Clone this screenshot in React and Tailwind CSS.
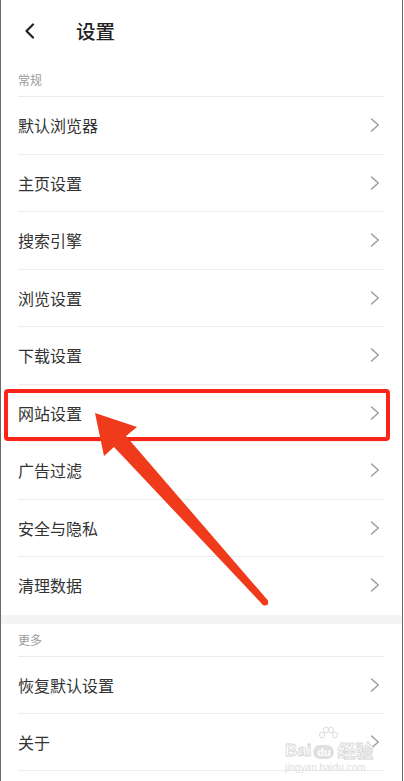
import React from "react";

const Chevron = () => (
  <svg width="10" height="14" viewBox="0 0 10 14" fill="none" className="shrink-0">
    <path d="M1.5 1 L8.3 7 L1.5 13" stroke="#9a9a9a" strokeWidth="1.4" strokeLinecap="round" strokeLinejoin="round" />
  </svg>
);

const Row = ({ label, last }) => (
  <div
    className={
      "h-[57.5px] flex items-center justify-between border-t border-[#ececec] pr-[5px] " +
      (last ? "border-b" : "")
    }
  >
    <span className="text-[16px] text-[#333333] leading-none">{label}</span>
    <Chevron />
  </div>
);

export default function App() {
  const general = ["默认浏览器", "主页设置", "搜索引擎", "浏览设置", "下载设置", "网站设置", "广告过滤", "安全与隐私", "清理数据"];
  const more = ["恢复默认设置", "关于"];
  return (
    <div
      className="relative w-[404px] h-[781px] overflow-hidden bg-white"
      style={{ fontFamily: '"Noto Sans CJK SC", "Noto Sans", sans-serif' }}
    >
      <div className="w-[403px] h-full border-l border-r border-[#6a6a6a] bg-white">
        {/* header */}
        <div className="h-[64px] pb-[3px] flex items-center">
          <div className="w-[75px] pl-[23px] flex items-center">
            <svg width="12" height="16" viewBox="0 0 12 16" fill="none">
              <path d="M9 1.5 L2.5 8 L9 14.5" stroke="#222" strokeWidth="2.2" strokeLinecap="round" strokeLinejoin="round" />
            </svg>
          </div>
          <span className="text-[19.5px] text-[#222] font-medium leading-none">设置</span>
        </div>

        <div className="px-[17px]">
          <div className="h-[32px] flex items-center text-[12px] text-[#9b9b9b]">常规</div>
          {general.map((l) => (
            <Row key={l} label={l} />
          ))}
        </div>

        <div className="h-[9px] bg-[#f4f4f4] mt-[1px]" />

        <div className="px-[17px]">
          <div className="h-[32px] flex items-center text-[12px] text-[#9b9b9b]">更多</div>
          {more.map((l, i) => (
            <Row key={l} label={l} last={i === more.length - 1} />
          ))}
        </div>
      </div>

      {/* red highlight box */}
      <div className="absolute left-[4px] top-[389px] w-[386px] h-[52px] border-[4px] border-[#ff2418] rounded-[4px]" />

      {/* arrow */}
      <svg className="absolute left-0 top-0" width="404" height="781" viewBox="0 0 404 781">
        <polygon
          points="95,413 137,427 126,436 267.5,600 262.5,604.5 114,447 104,456"
          fill="#f03a1c"
          strokeLinejoin="round"
        />
        <circle cx="265" cy="602.2" r="3.2" fill="#f03a1c" />
      </svg>

      {/* watermark */}
      <div className="absolute left-[285px] top-[726px] pointer-events-none">
        <svg className="absolute left-[33px] top-0" width="20" height="17" viewBox="0 0 20 17" fill="none" stroke="#dcdcdc" strokeWidth="1">
          <ellipse cx="4" cy="9" rx="2.5" ry="3" />
          <ellipse cx="8" cy="4" rx="2.5" ry="3" />
          <ellipse cx="13" cy="4" rx="2.5" ry="3" />
          <ellipse cx="17" cy="9" rx="2.5" ry="3" />
        </svg>
        <div className="flex items-end gap-[2px] leading-none mt-[15px]">
          <span className="text-[17px] font-bold text-white [-webkit-text-stroke:0.8px_#d6d6d6]" style={{ fontFamily: '"Liberation Sans", sans-serif' }}>Bai</span>
          <span className="text-[11px] font-bold text-white bg-[#e0e0e0] rounded-full w-[21px] h-[14px] flex items-center justify-center" style={{ fontFamily: '"Liberation Sans", sans-serif' }}>du</span>
          <span className="text-[18px] font-bold text-white [-webkit-text-stroke:0.8px_#d6d6d6] ml-[1px]">经验</span>
        </div>
        <div className="text-[10px] text-[#dedede] mt-[4px] leading-none" style={{ fontFamily: '"Liberation Sans", sans-serif' }}>jingyan.baidu.com</div>
      </div>
    </div>
  );
}
